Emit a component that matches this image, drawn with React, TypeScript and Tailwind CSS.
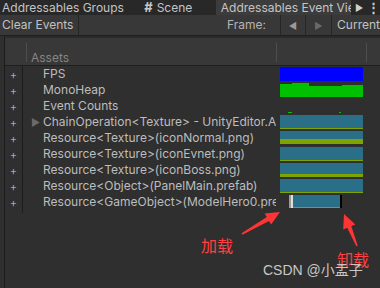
import React from "react";

type Bar = { x: number; y: number; w: number; h: number; c: string };

const TEAL = "#2b6e87";
const OLIVE = "#7ea400";

const rows: { name: string; arrow?: boolean; bars: Bar[]; poly?: string }[] = [
  { name: "FPS", bars: [{ x: 0, y: 1, w: 83, h: 14, c: "#0000ff" }] },
  { name: "MonoHeap", bars: [], poly: "0,2 12,2 12,1 29,1 29,4 62,4 62,3 83,3 83,15 0,15" },
  {
    name: "Event Counts",
    bars: [
      { x: 8, y: 14, w: 4, h: 1, c: "#00c000" },
      { x: 59, y: 14, w: 2, h: 1, c: "#00c000" },
    ],
  },
  {
    name: "ChainOperation<Texture> - UnityEditor.AddressableAssets",
    arrow: true,
    bars: [
      { x: 0, y: 1, w: 83, h: 13, c: TEAL },
      { x: 0, y: 14, w: 83, h: 1, c: OLIVE },
    ],
  },
  {
    name: "Resource<Texture>(iconNormal.png)",
    bars: [
      { x: 0, y: 1, w: 83, h: 8, c: TEAL },
      { x: 0, y: 9, w: 83, h: 5, c: OLIVE },
    ],
  },
  {
    name: "Resource<Texture>(iconEvnet.png)",
    bars: [
      { x: 0, y: 1, w: 83, h: 13, c: TEAL },
      { x: 0, y: 14, w: 83, h: 1, c: OLIVE },
    ],
  },
  {
    name: "Resource<Texture>(iconBoss.png)",
    bars: [
      { x: 0, y: 1, w: 83, h: 11, c: TEAL },
      { x: 0, y: 12, w: 83, h: 3, c: OLIVE },
    ],
  },
  {
    name: "Resource<Object>(PanelMain.prefab)",
    bars: [
      { x: 0, y: 1, w: 83, h: 13, c: TEAL },
      { x: 0, y: 14, w: 83, h: 1, c: OLIVE },
    ],
  },
  {
    name: "Resource<GameObject>(ModelHero0.prefab)",
    bars: [
      { x: 9, y: 1, w: 2, h: 13, c: "#9a9a9a" },
      { x: 11, y: 1, w: 2, h: 13, c: "#dedede" },
      { x: 13, y: 1, w: 47, h: 12, c: TEAL },
      { x: 13, y: 13, w: 47, h: 1, c: OLIVE },
      { x: 60, y: 1, w: 2, h: 13, c: "#000000" },
    ],
  },
];

function arrowPoints(tx: number, ty: number, hx: number, hy: number, headLen: number, headHalf: number, tailHalf: number, neckHalf: number) {
  const dx = hx - tx;
  const dy = hy - ty;
  const len = Math.hypot(dx, dy);
  const ux = dx / len;
  const uy = dy / len;
  const px = -uy;
  const py = ux;
  const bx = hx - ux * headLen;
  const by = hy - uy * headLen;
  const pts = [
    [tx + px * tailHalf, ty + py * tailHalf],
    [bx + px * neckHalf, by + py * neckHalf],
    [bx + px * headHalf, by + py * headHalf],
    [hx, hy],
    [bx - px * headHalf, by - py * headHalf],
    [bx - px * neckHalf, by - py * neckHalf],
    [tx - px * tailHalf, ty - py * tailHalf],
  ];
  return pts.map((p) => p[0].toFixed(1) + "," + p[1].toFixed(1)).join(" ");
}

export default function App() {
  return (
    <div className="relative w-[380px] h-[288px] overflow-hidden bg-[#2f2f2f] text-[12px] leading-none font-[family-name:Inter,'Noto_Sans',sans-serif]">
      {/* Tab bar */}
      <div className="flex h-[15px] bg-[#282828] text-[#c4c4c4] whitespace-nowrap">
        <div className="w-[140px] pl-[2px] flex items-center">Addressables Groups</div>
        <div className="w-[77px] pl-[5px] flex items-center gap-[4px]">
          <span className="text-[13px] font-bold text-[#c8c8c8]">#</span>
          <span>Scene</span>
        </div>
        <div className="w-[136px] bg-[#3c3c3c] pl-[5px] flex items-center overflow-hidden">Addressables Event Vie</div>
        <div className="w-[16px] flex items-center justify-center text-[9px] text-[#cfcfcf]">▶</div>
        <div className="flex-1 flex items-center justify-center text-[13px] text-[#cfcfcf] font-bold">⋮</div>
      </div>

      {/* Toolbar */}
      <div className="flex h-[21px] bg-[#383838] border-b border-[#1f1f1f] text-[#c2c2c2] whitespace-nowrap">
        <div className="w-[80px] pl-[2px] flex items-center border-r border-[#252525]">Clear Events</div>
        <div className="w-[151px]" />
        <div className="w-[54px] flex items-center text-[#b4b4b4]">Frame:</div>
        <div className="w-[25px] border-l border-[#262626] flex items-center justify-center text-[9px] text-[#9a9a9a]">◀</div>
        <div className="w-[27px] border-l border-[#262626] flex items-center justify-center text-[9px] text-[#6a6a6a]">▶</div>
        <div className="flex-1 border-l border-[#262626] pl-[5px] flex items-center">Current</div>
      </div>

      {/* Tree view */}
      <div className="ml-[4px] h-[252px] border-l border-[#1c1c1c] flex flex-col">
        {/* Header */}
        <div className="h-[30px] bg-[#383838] border-t-2 border-t-[#2a2a2a] border-b border-b-[#1e1e1e] flex items-start pt-[5px] text-[#858585]">
          <div className="w-[21px]" />
          <div className="w-[1px] h-[19px] bg-[#4e4e4e]" />
          <div className="w-[249px] pl-[4px] pt-[9px] leading-[12px]">Assets</div>
          <div className="w-[1px] h-[19px] bg-[#4e4e4e]" />
          <div className="w-[89px]" />
          <div className="w-[1px] h-[19px] bg-[#4e4e4e]" />
        </div>

        {/* Rows */}
        <div className="flex flex-col">
          {rows.map((r, i) => (
            <div key={i} className="flex h-[16px] text-[#bdbdbd] whitespace-nowrap">
              <div className="w-[18px] border-r border-[#1c1c1c] flex items-center justify-center pt-[3px] text-[11px] text-[#a8a8a8]">+</div>
              <div className="w-[253px] pl-[8px] flex items-center overflow-hidden">
                <span className="w-[12px] shrink-0 text-[10px] text-[#6a6a6a]">{r.arrow ? "▶" : ""}</span>
                <span>{r.name}</span>
              </div>
              <div className="w-[90px] pl-[4px] flex items-start">
                <svg width="83" height="16" viewBox="0 0 83 16">
                  {r.poly && <polygon points={r.poly} fill="#00c000" />}
                  {r.bars.map((b, j) => (
                    <rect key={j} x={b.x} y={b.y} width={b.w} height={b.h} fill={b.c} />
                  ))}
                </svg>
              </div>
            </div>
          ))}
          <div className="w-[18px] h-[3px] border-r border-[#1c1c1c]" />
        </div>
      </div>

      {/* Annotations overlay */}
      <svg className="absolute left-0 top-0 pointer-events-none" width="380" height="288" viewBox="0 0 380 288">
        <polygon points={arrowPoints(242, 234, 280, 212, 14, 6.5, 0.8, 2.2)} fill="#ff3535" />
        <polygon points={arrowPoints(357, 246, 344, 214, 14, 6.5, 0.8, 2.2)} fill="#ff3535" />
      </svg>
      <div className="absolute left-[201px] top-[236px] text-[16px] leading-[18px] text-[#ff4040] font-[family-name:'Noto_Sans_CJK_SC',sans-serif]">加载</div>
      <div className="absolute left-[337px] top-[250px] text-[16px] leading-[18px] text-[#ff4040] font-[family-name:'Noto_Sans_CJK_SC',sans-serif]">卸载</div>
      <div className="absolute left-[263px] top-[262px] text-[14px] leading-[16px] text-[#c8c8c8] whitespace-nowrap font-[family-name:'Liberation_Sans','Noto_Sans_CJK_SC',sans-serif]">CSDN @小盂子</div>
    </div>
  );
}
